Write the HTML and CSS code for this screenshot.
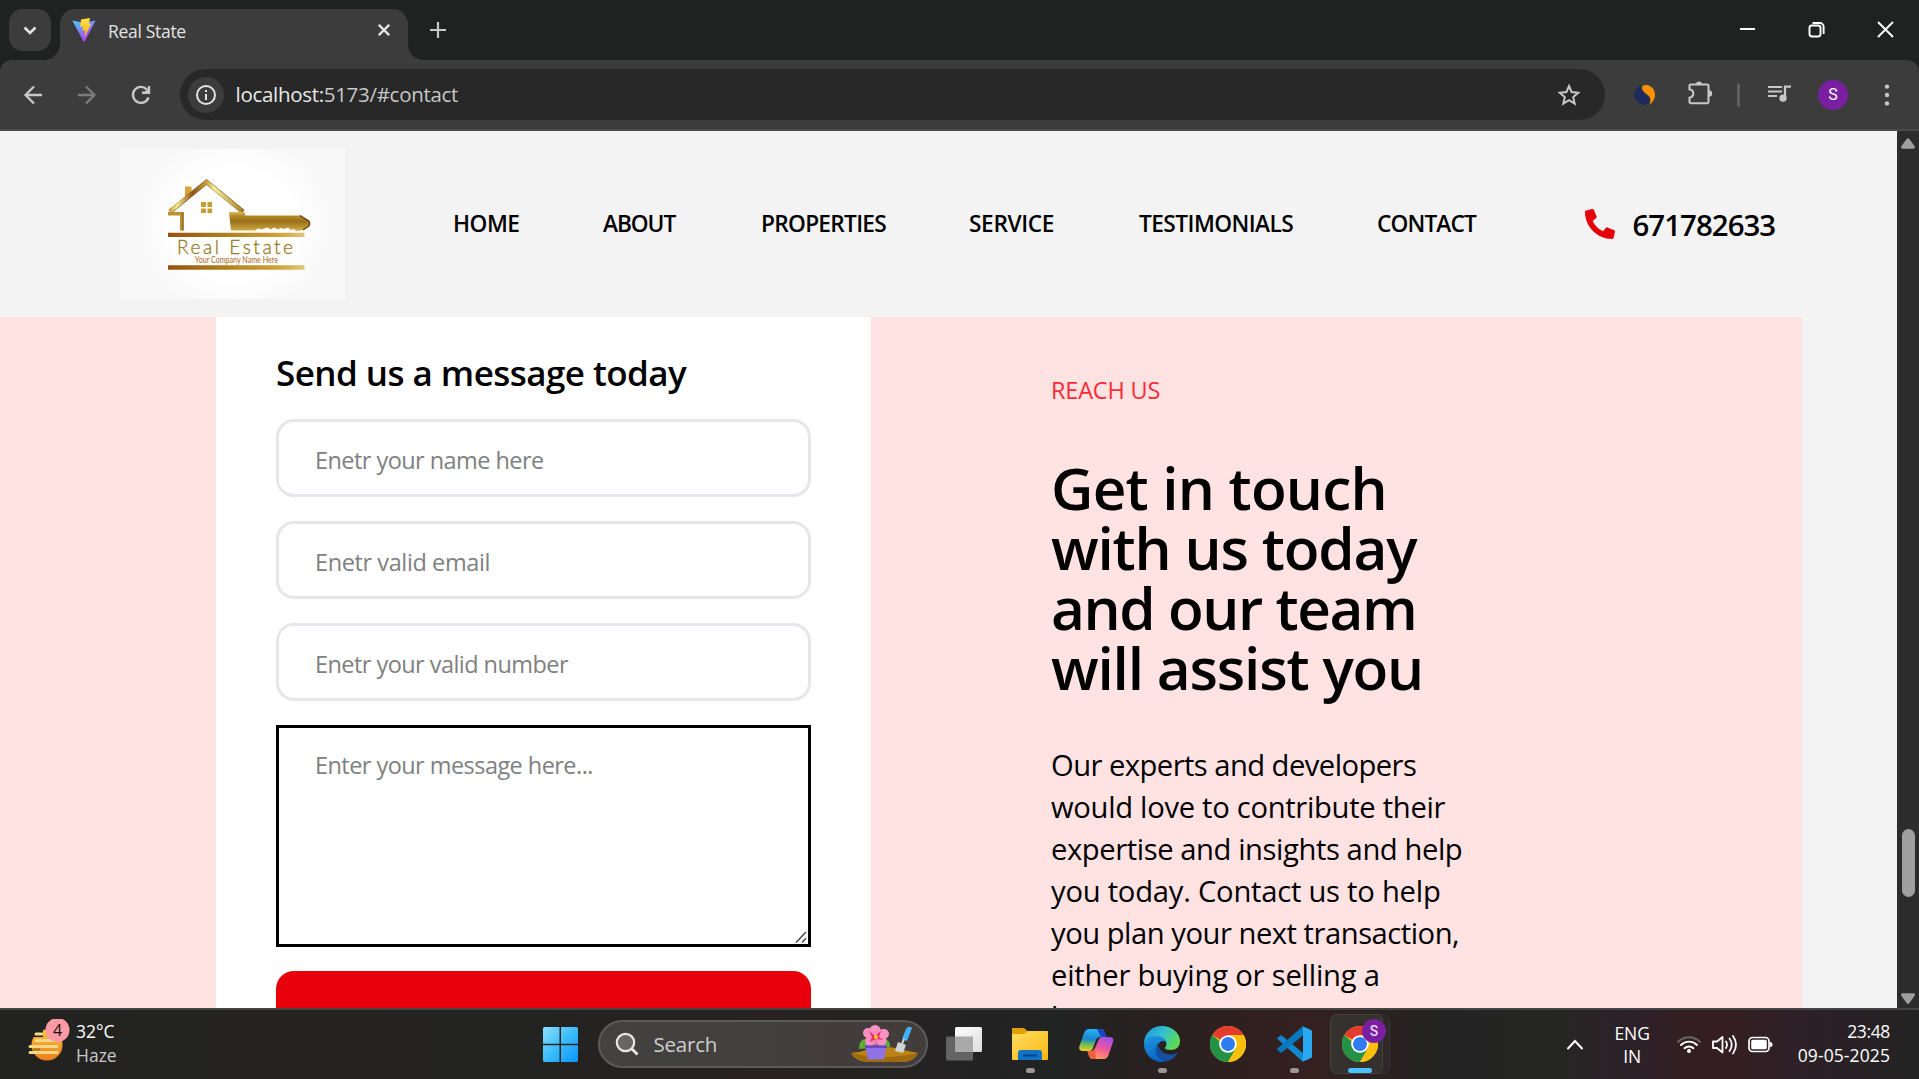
FILE: index.html
```
<!DOCTYPE html>
<html lang="en">
<head>
<meta charset="utf-8">
<title>Real State</title>
<link rel="stylesheet" href="styles.css">
</head>
<body>
<div class="screen">
  <div class="tabstrip">
    <div class="tab-search"><svg width="42" height="42" viewBox="0 0 42 42" fill="none" stroke="#e3e3e3" stroke-width="2.6"><path d="M15.5 18.5l5.5 5.5 5.5-5.5"/></svg></div>
    <div class="tab">
      <svg class="favicon" width="24" height="24" viewBox="0 0 24 24"><defs><linearGradient id="vite" x1="0" y1="0" x2=".6" y2="1"><stop offset="0" stop-color="#41d1ff"/><stop offset="1" stop-color="#bd34fe"/></linearGradient><linearGradient id="bolt" x1="0" y1="0" x2="0" y2="1"><stop offset="0" stop-color="#ffe74a"/><stop offset="1" stop-color="#ffa800"/></linearGradient></defs><path fill="url(#vite)" d="M.3 2.6L8 3.9l8-.1 7.7-1.2L12.6 23.5q-.5.8-1 0z"/><path fill="url(#bolt)" d="M9 1.600L18 0l-1.200 6 2.400-.4-6.600 14 .6-7.400-3 .6 1-4.200-3 .6z"/></svg>
      <span class="tab-title">Real State</span>
      <svg class="tab-close" width="12" height="12" viewBox="0 0 12 12" stroke="#e3e3e3" stroke-width="2.3"><path d="M.8.8l10.400 10.400M11.200.8L.8 11.200"/></svg>
    </div>
    <svg class="new-tab" width="16" height="16" viewBox="0 0 16 16" stroke="#c7c7c7" stroke-width="2.2"><path d="M8 0v16M0 8h16"/></svg>
    <div class="window-buttons">
      <svg width="75" height="58" viewBox="0 0 75 58"><path d="M33 29h15" stroke="#fff" stroke-width="2"/></svg>
      <svg width="69" height="58" viewBox="0 0 69 58" fill="none" stroke="#fff" stroke-width="1.9"><rect x="27.500" y="25.500" width="11" height="11" rx="2.400"/><path d="M30.500 23H38a3.600 3.600 0 0 1 3.600 3.600V34"/></svg>
      <svg width="68" height="58" viewBox="0 0 68 58" stroke="#fff" stroke-width="1.9"><path d="M27 22l15 15M42 22L27 37"/></svg>
    </div>
  </div>
  <div class="toolbar">
    <div class="nav-buttons">
      <svg width="54" height="54" viewBox="0 0 54 54" fill="none" stroke="#c7c7c7" stroke-width="2.3"><path d="M36 27H19.500M28 18.500L19.500 27l8.500 8.500"/></svg>
      <svg width="54" height="54" viewBox="0 0 54 54" fill="none" stroke="#7c7c7c" stroke-width="2.3"><path d="M18 27h16.500M26 18.500l8.500 8.500-8.500 8.500"/></svg>
      <svg width="54" height="54" viewBox="0 0 54 54" fill="none" stroke="#c7c7c7" stroke-width="2.4"><path d="M34.500 29.500a8 8 0 1 1-1.800-8.200M35 18v6.800h-7"/><path d="M34.800 24.500l-5-.1 5-5z" fill="#c7c7c7" stroke="none"/></svg>
    </div>
    <div class="omnibox">
      <svg class="site-info" width="36" height="36" viewBox="0 0 36 36" fill="none" stroke="#e3e3e3" stroke-width="2"><circle cx="18" cy="18" r="18" fill="#3c3c3c" stroke="none"/><circle cx="18" cy="18" r="9"/><path d="M18 17v6M18 13v2"/></svg>
      <span class="url">localhost:<span class="url-rest">5173/#contact</span></span>
      <svg class="star" width="24" height="24" viewBox="0 0 24 24" fill="none" stroke="#c7c7c7" stroke-width="2"><path d="M12 3l2.600 6.100 6.600.6-5 4.400 1.500 6.500L12 17.200l-5.700 3.400 1.500-6.500-5-4.400 6.600-.6z"/></svg>
    </div>
    <div class="extensions">
      <svg class="ext" width="22" height="22" viewBox="0 0 22 22"><path fill="#1f2a5c" d="M6.500 1.500C1 4 0 9 .5 12.500 1.500 18 6 21.500 12 20.500c3-.8 4.500-3.500 3-6.500C13 10 6 8 6.500 1.500z"/><path fill="#ff9100" d="M8.500 2C10.500.4 14.500.4 17.500 3c4.500 4 5.500 12-2 18 2-6 1-8-3-11C9 7.500 7.500 5 8.500 2z"/></svg>
      <svg class="puzzle" width="26" height="26" viewBox="0 0 26 26" fill="none" stroke="#c7c7c7" stroke-width="2.100"><path d="M3.600 4.500h16.800q1.100 0 1.100 1.100v16.500q0 1.100-1.100 1.100H3.600q-1.100 0-1.100-1.100v-4.400c5-1 5-7.400 0-8.400V5.600q0-1.100 1.100-1.100z"/><path fill="#c7c7c7" stroke="none" d="M8.800 4a3.300 3.300 0 0 1 6.400 0zM22 10.200a3.200 3.200 0 0 1 0 6.400z"/></svg>
      <span class="divider"></span>
      <svg class="media" width="24" height="20" viewBox="0 0 24 20" fill="none" stroke="#c7c7c7" stroke-width="2.100"><path d="M0 2h14M0 6.500h14M0 11h9"/><path d="M17 13V1.700h6" stroke-width="2.300"/><circle cx="15" cy="13.200" r="3.600" fill="#c7c7c7" stroke="none"/></svg>
      <span class="avatar">S</span>
      <svg class="kebab" width="6" height="22" viewBox="0 0 6 22" fill="#c7c7c7"><circle cx="3" cy="2.600" r="2.200"/><circle cx="3" cy="11" r="2.200"/><circle cx="3" cy="19.400" r="2.200"/></svg>
    </div>
  </div>

  <div class="viewport">
    <div class="page">
      <header class="site-header">
        <svg class="logo" width="225" height="150" viewBox="0 0 225 150">
          <defs>
            <radialGradient id="glow" cx=".51" cy=".5" r=".5" gradientTransform="translate(.05 -.1) scale(.9 1.200)"><stop offset=".6" stop-color="#fff"/><stop offset="1" stop-color="#f8f8f8"/></radialGradient>
            <linearGradient id="bar"><stop offset="0" stop-color="#99500f"/><stop offset=".4" stop-color="#ab801c"/><stop offset=".8" stop-color="#cda136"/><stop offset="1" stop-color="#e0c77c"/></linearGradient>
            <linearGradient id="roof" gradientUnits="userSpaceOnUse" x1="48" y1="0" x2="125" y2="0"><stop offset="0" stop-color="#c39a2e"/><stop offset=".12" stop-color="#f3e78e"/><stop offset=".32" stop-color="#935317"/><stop offset=".5" stop-color="#c9a040"/><stop offset=".6" stop-color="#f6ef9b"/><stop offset="1" stop-color="#a87a1c"/></linearGradient>
            <linearGradient id="key" x1="0" y1="0" x2="0" y2="1"><stop offset="0" stop-color="#d9bd68"/><stop offset=".2" stop-color="#b58a26"/><stop offset=".5" stop-color="#9a701a"/><stop offset="1" stop-color="#d3ac45"/></linearGradient>
          </defs>
          <rect width="225" height="150" fill="#f8f8f8"/>
          <rect width="225" height="150" fill="url(#glow)"/>
          <path d="M65 37.500h6.500v9L65 53z" fill="#d3a63a"/>
          <path d="M50 62.800L86.500 33 123 62.800" fill="none" stroke="#6b5722" stroke-width="4.600"/>
          <path d="M50 62.500L86.500 33 122 62.200" fill="none" stroke="url(#roof)" stroke-width="3.800"/>
          <path d="M48 63h15.500v18.500H60V66.500H48z" fill="#bd9130"/><path d="M63 63v18.500" stroke="#6b5312"/>
          <path d="M81 53h5v5h-5zM87.500 53H92v5h-4.500zM81 59.500h5V64h-5zM87.500 59.500H92V64h-4.500z" fill="#c99d31"/>
          <path d="M109 63h16v3.500h56l8 5.500q1.500 2.500 0 5l-6 4-7 1-2-2-3 1-3-2.500-4 1.500-3-1-3 1.500-4-2-3 2-4-2-5 2-4-1-3 2h-24z" fill="url(#key)"/>
          <path d="M180 66.500l9 5.500q1.500 2.500 0 5l-6 4" fill="none" stroke="#5d4612" stroke-width="1.200"/>
          <path fill="url(#bar)" d="M48 83.700h136.500V88H48zM48 116.200h136.500v4.500H48z"/>
          <text class="logo-name" x="57" y="105" textLength="116">Real Estate</text>
          <text class="logo-tag" x="75" y="113.700" textLength="83" lengthAdjust="spacingAndGlyphs">Your Company Name Here</text>
        </svg>
        <nav class="menu"><a>HOME</a><a>ABOUT</a><a>PROPERTIES</a><a>SERVICE</a><a>TESTIMONIALS</a><a>CONTACT</a></nav>
        <div class="phone">
          <svg width="30" height="30" viewBox="0 0 512 512" fill="#e7000b"><path d="M497.390 361.800l-112-48a24 24 0 0 0-28 6.900l-49.600 60.600A370.660 370.660 0 0 1 130.600 204.110l60.600-49.600a23.940 23.940 0 0 0 6.900-28l-48-112A24.160 24.160 0 0 0 122.600.61l-104 24A24 24 0 0 0 0 48c0 256.500 207.900 464 464 464a24 24 0 0 0 23.400-18.600l24-104a24.290 24.290 0 0 0-14.010-27.600z"/></svg>
          <span>671782633</span>
        </div>
      </header>
      <section class="contact">
        <form class="card">
          <h2>Send us a message today</h2>
          <input type="text" placeholder="Enetr your name here">
          <input type="text" placeholder="Enetr valid email">
          <input type="text" placeholder="Enetr your valid number">
          <div class="message">
            <textarea placeholder="Enter your message here..."></textarea>
            <svg class="grip" width="12" height="12" viewBox="0 0 12 12" stroke="#444" stroke-width="1.400"><path d="M1 11.500L11 1M7 11.500L11 7.300"/></svg>
          </div>
          <div class="submit"></div>
        </form>
        <div class="reach">
          <h3>REACH US</h3>
          <h1><span>Get in touch</span><span>with us today</span><span>and our team</span><span>will assist you</span></h1>
          <p><span>Our experts and developers</span><span>would love to contribute their</span><span>expertise and insights and help</span><span>you today. Contact us to help</span><span>you plan your next transaction,</span><span>either buying or selling a</span><span>home.</span></p>
        </div>
      </section>
    </div>
    <div class="scrollbar">
      <svg width="14" height="11" viewBox="0 0 14 11" fill="#9f9f9f"><path d="M5.800.8q1.200-1.300 2.400 0L13.500 8q1.200 2.700-1 2.700h-11Q-.7 10.700.5 8z"/></svg>
      <div class="thumb"></div>
      <svg width="14" height="11" viewBox="0 0 14 11" fill="#9f9f9f"><path d="M5.800 10.200q1.200 1.300 2.400 0L13.500 3q1.200-2.700-1-2.700h-11Q-.7.3.5 3z"/></svg>
    </div>
  </div>

  <div class="taskbar">
    <div class="weather">
      <svg width="46" height="48" viewBox="0 0 46 48"><defs><linearGradient id="sun" x1="0" y1="0" x2="0" y2="1"><stop offset="0" stop-color="#f9c440"/><stop offset="1" stop-color="#ed7d1c"/></linearGradient></defs><circle cx="19" cy="26" r="15.500" fill="url(#sun)"/><path d="M4 11h11v7H4z" fill="#242321"/><path d="M8 15h6M8 21.500h23M2 27.500h27M2 33.500h27" stroke="#f6d88a" stroke-width="3" stroke-linecap="round"/><path d="M5 30.500h7" stroke="#a8700f" stroke-width="2"/><circle cx="29.500" cy="11" r="12" fill="#ff99a4"/><text class="badge-num" x="29.500" y="16.500" text-anchor="middle">4</text></svg>
      <div class="two-line"><span>32°C</span><span class="dim">Haze</span></div>
    </div>
    <div class="slot start"><svg width="35" height="35" viewBox="0 0 35 35"><defs><linearGradient id="win" x1="0" y1="0" x2="1" y2="1"><stop offset="0" stop-color="#8adfff"/><stop offset=".5" stop-color="#3cbcfb"/><stop offset="1" stop-color="#0a93fb"/></linearGradient></defs><path fill="url(#win)" d="M1.500 0h15v16.800H0V1.500Q0 0 1.500 0zM18 0h15.500Q35 0 35 1.500v15.300H18zM0 18.200h16.500V35h-15Q0 35 0 33.500zM18 18.200h17v15.300q0 1.500-1.500 1.500H18z"/></svg></div>
    <div class="search">
      <svg width="24" height="24" viewBox="0 0 24 24" fill="none" stroke="#e6e6e6" stroke-width="2.200"><circle cx="10.500" cy="10.500" r="8.700" fill="#666"/><path d="M16.500 16.500l6 6" stroke-width="2.800"/></svg>
      <span>Search</span>
      <svg class="garden" width="68" height="38" viewBox="0 0 68 38"><path d="M0 28q10-1 19-4 15-4 30 0 8 2 18 4-4 9-16 9H18Q5 37 0 28z" fill="#bd8415"/><path d="M1 28q30 8 66 0-5 9-18 9H18Q5 36 1 28z" fill="#9f690f"/><path d="M8 24q0-9 6-10l6 9zM39 22q0-8-6-8l-6 9z" fill="#5fae31"/><circle cx="24.500" cy="11" r="9" fill="#f26aa6"/><g fill="#fa8fc2"><circle cx="17" cy="8" r="5"/><circle cx="24" cy="5.500" r="5.500"/><circle cx="33" cy="9" r="5"/><circle cx="30.500" cy="16" r="5"/><circle cx="19" cy="16" r="5"/></g><path d="M18 6l6 5 6-5-2 6 4 3-7-1-6 3 2-5z" fill="#e5335f"/><circle cx="25" cy="12" r="2" fill="#ffc933"/><path d="M14 20.500h22l-3 14H17z" fill="#8f72e3"/><path d="M14 20.500h22v2.500H14z" fill="#6a4ac0"/><path d="M55 4q3-4 6-1l-5 13-5-2z" fill="#42b1f8"/><path d="M53 14l-2 5" stroke="#ddd" stroke-width="2"/><path d="M47 17l8 3-3 8-8-2z" fill="#cfd4d8"/></svg>
    </div>
    <div class="apps">
      <div class="slot"><svg width="36" height="34" viewBox="0 0 36 34"><defs><linearGradient id="tv" x1="0" y1="0" x2="1" y2="1"><stop offset="0" stop-color="#fff"/><stop offset="1" stop-color="#dcdcdc"/></linearGradient></defs><rect y="9.500" width="27" height="24" rx="1.500" fill="#636363"/><rect x="9" width="27" height="25" rx="1.500" fill="url(#tv)"/><path d="M9 9.500h18V25H9z" fill="#a9a9a9"/></svg></div>
      <div class="slot running"><svg width="36" height="34" viewBox="0 0 36 34"><defs><linearGradient id="fold" x1="0" y1="0" x2="1" y2="1"><stop offset="0" stop-color="#ffdd5f"/><stop offset="1" stop-color="#fdb813"/></linearGradient></defs><path d="M0 2Q0 1 1 1h11l4 3.500H35q1 0 1 1V12H0z" fill="#e2a008"/><path d="M0 7h12l4-3h19q1 0 1 1v27q0 1-1 1H1q-1 0-1-1z" fill="url(#fold)"/><path d="M6 33V26q0-3 3-3h18q3 0 3 3v7z" fill="#1173c8"/><path d="M11 28.500h14" stroke="#0a4386" stroke-width="2"/></svg></div>
      <div class="slot"><svg width="35" height="32" viewBox="0 0 35 32"><defs><linearGradient id="cpa" x1=".3" y1="0" x2=".2" y2="1"><stop offset="0" stop-color="#25b0f2"/><stop offset=".45" stop-color="#1a86cf"/><stop offset=".75" stop-color="#7ec246"/><stop offset="1" stop-color="#f8cd24"/></linearGradient><linearGradient id="cpb" x1=".7" y1="0" x2=".3" y2="1"><stop offset="0" stop-color="#a04fe8"/><stop offset=".5" stop-color="#f0569a"/><stop offset="1" stop-color="#ffa05a"/></linearGradient></defs><path d="M10 1h12q2.500 0 3.500 3l1.500 5h-6q-3 0-4 3l-3 8q-1 3-4 3H4q-5 0-3.500-5L5 5q1.500-4 5-4z" fill="url(#cpa)"/><path d="M18 1h4q2.500 0 3.500 3l1.500 5h-5z" fill="#1746c5"/><path d="M25 31H14q-3 0-4-3l-1.500-5H12q3 0 4-3l3.500-8q1-3 4-3H30q5.500 0 4 5l-4.500 13q-1.500 4-4.500 4z" fill="url(#cpb)"/><path d="M17 31h-3q-3 0-4-3l-1.500-5H12q3 0 4-3z" fill="#f0603f"/></svg></div>
      <div class="slot running"><svg width="36" height="36" viewBox="0 0 36 36"><defs><linearGradient id="e1" x1="0" y1=".2" x2="1" y2=".6"><stop offset="0" stop-color="#2196dd"/><stop offset=".5" stop-color="#35c1cf"/><stop offset="1" stop-color="#5fdc49"/></linearGradient><linearGradient id="e2" x1="0" y1="0" x2=".3" y2="1"><stop offset="0" stop-color="#1c9be0"/><stop offset="1" stop-color="#0d63c4"/></linearGradient></defs><path d="M0 18C0 7 8 0 18 0s18 7 18 15c0 6-4 9-9 9-4 0-6-1-6-2 0-1 1.500-1.500 1.500-4 0-3-3-6-8-6C8 12 2 14 0 18z" fill="url(#e1)"/><path d="M0 18c1-6 7-8 12-8 6 0 10 3 10.500 7-1.500-2-4-2.500-5.500-1.500-5 3-6 10 3 18.500 1 1-1 2-2 2C8 36 0 28 0 18z" fill="url(#e2)"/><path d="M14 17c-5 6-2 17 8 18.500C27 35 31 31.500 33 28c.4-.9-.2-1.300-1-.8-8 3.800-18-1.200-18-10.200z" fill="#13509f"/></svg></div>
      <div class="slot"><svg width="36" height="36" viewBox="0 0 48 48"><g id="chrome"><circle cx="24" cy="24" r="24" fill="#fbbf0d"/><path d="M24 24L3.200 12A24 24 0 0 1 44.800 12z" fill="#e33b2e"/><path d="M3.200 12A24 24 0 0 0 24 48l10.400-18H24z" fill="#239146"/><path d="M24 24l10.400 6L24 48a24 24 0 0 0 20.800-36H24z" fill="#fbbf0d"/><circle cx="24" cy="24" r="11.800" fill="#fff"/><circle cx="24" cy="24" r="9.300" fill="#2f7bf0"/></g></svg></div>
      <div class="slot running"><svg width="36" height="36" viewBox="0 0 36 36"><path d="M1 12.500l3-2.800q1-.6 2 0L27 27v9z" fill="#1187d0"/><path d="M1 23.500l3 2.800q1 .6 2 0L27 9.500V0L1 23q-.5.300 0 .5z" fill="#0878be"/><path d="M26 0l9 4q1 .5 1 1.500v25q0 1-1 1.500l-9 4q1-.5 1-2V2q0-1.500-1-2z" fill="#2aaaf2"/></svg></div>
      <div class="slot active"><div class="tile-back"></div><div class="tile"></div><svg width="36" height="36" viewBox="0 0 48 48"><use href="#chrome"/></svg><span class="profile">S</span></div>
    </div>
    <div class="tray">
      <svg class="chev" width="18" height="12" viewBox="0 0 18 12" fill="none" stroke="#fff" stroke-width="2" stroke-linecap="round"><path d="M2 9.500L9 2l7 7.500"/></svg>
      <div class="two-line lang"><span>ENG</span><span>IN</span></div>
      <svg class="wifi" width="24" height="20" viewBox="0 0 24 20" fill="none" stroke="#fff" stroke-width="1.900" stroke-linecap="round"><path d="M1 7a15 15 0 0 1 22 0" stroke="#666"/><path d="M4 10a11.200 11.200 0 0 1 16 0M7.500 13.200a6.600 6.600 0 0 1 9 0"/><circle cx="12" cy="16" r="2" fill="#fff" stroke="none"/></svg>
      <svg class="vol" width="25" height="22" viewBox="0 0 25 22" fill="none" stroke="#fff" stroke-width="1.800" stroke-linecap="round" stroke-linejoin="round"><path d="M1 7.500V14h4l5.500 4.500V3L5 7.500zM14 7.500q2 3 0 6.500M17.500 4.500q4.500 6 0 12.500M21 2q6 8.700 0 17.500"/></svg>
      <svg class="battery" width="25" height="18" viewBox="0 0 25 18"><rect x="1" y="1.500" width="20" height="14" rx="3.500" fill="none" stroke="#fff" stroke-width="1.700"/><rect x="3.200" y="3.700" width="15.600" height="9.600" rx="1.500" fill="#fff"/><path d="M22 6q2.500 0 2.500 2.500T22 11z" fill="#fff"/></svg>
      <div class="two-line clock"><span class="time">23:48</span><span>09-05-2025</span></div>
    </div>
  </div>
</div>
</body>
</html>
```
FILE: styles.css
```
* { box-sizing: border-box; }
body { margin: 0; font-family: "Open Sans", "Noto Sans", sans-serif; color: #000; background: #202221; }
svg { display: block; flex: none; }
h1, h2, h3, p { margin: 0; }
.screen { width: 1919px; height: 1079px; display: flex; flex-direction: column; overflow: hidden; white-space: nowrap; }

/* browser tab strip */
.tabstrip { height: 60px; display: flex; background: #202221; flex: none; }
.tab-search { width: 42px; height: 42px; margin: 9px 9px 0; border-radius: 14px; background: #3c3c3c; }
.tab { position: relative; width: 348px; height: 51px; margin-top: 9px; padding: 0 18px 0 12px; display: flex; align-items: flex-start; background: #3c3c3c; border-radius: 15px 15px 0 0; }
.tab::before, .tab::after { content: ""; position: absolute; bottom: 0; width: 15px; height: 15px; }
.tab::before { left: -15px; background: radial-gradient(circle at 0 0, transparent 14.5px, #3c3c3c 15px); }
.tab::after { right: -15px; background: radial-gradient(circle at 100% 0, transparent 14.5px, #3c3c3c 15px); }
.favicon { margin-top: 9px; }
.tab-title { margin: 10px 0 0 12px; font-size: 17.5px; line-height: 24px; letter-spacing: -.31px; color: #e3e3e3; flex: 1; }
.tab-close { margin-top: 15px; }
.new-tab { margin: 22px 0 0 22px; }
.window-buttons { display: flex; margin-left: auto; }

/* toolbar */
.toolbar { height: 71px; flex: none; display: flex; align-items: center; background: #3c3c3c; border-bottom: 2px solid #4a4a4a; border-radius: 12px 12px 0 0; }
.nav-buttons { display: flex; width: 180px; padding-left: 6px; }
.omnibox { width: 1425px; height: 51px; border-radius: 26px; background: #282828; display: flex; align-items: center; padding: 0 24px 0 7.5px; }
.url { margin-left: 12px; font-size: 20.5px; letter-spacing: -.3px; color: #e8e8e8; line-height: 30px; margin-top: -2px; flex: 1; }
.url-rest { color: #c7c7c7; }
.extensions { display: flex; align-items: center; }
.ext { margin-left: 28.5px; }
.puzzle { margin: -3px 0 0 31.5px; }
.divider { width: 3px; height: 24px; border-radius: 2px; background: #5f5f5f; margin-left: 24px; }
.media { margin-left: 28px; }
.avatar { width: 30px; height: 30px; border-radius: 50%; background: #7b1fa2; color: #fff; font: 16px/30px Roboto, sans-serif; text-align: center; margin-left: 26px; }
.kebab { margin-left: 36px; }

/* page */
.viewport { height: 877px; flex: none; display: flex; overflow: hidden; }
.page { width: 1897px; height: 877px; background: #f3f3f3; overflow: hidden; }
.site-header { height: 186px; padding: 18px 120px; display: flex; align-items: center; }
.logo-name { font: 300 19px Lato, sans-serif; fill: #96781c; stroke: #96781c; stroke-width: .3px; }
.logo-tag { font: 8.5px Lato, sans-serif; fill: #a8661c; }
.menu { margin: 0 0 0 108px; display: grid; grid-template-columns: 150px 158px 208px 170px 238px 208px; font-size: 22.7px; line-height: 36px; font-weight: 600; }
.menu a:nth-child(1) { letter-spacing: -.5px; }
.menu a:nth-child(2) { letter-spacing: -1.07px; }
.menu a:nth-child(3) { letter-spacing: -.72px; }
.menu a:nth-child(4) { letter-spacing: -.38px; }
.menu a:nth-child(5) { letter-spacing: -.56px; }
.menu a:nth-child(6) { letter-spacing: -.87px; }
.phone { display: flex; align-items: center; font-size: 29.4px; line-height: 42px; font-weight: 600; letter-spacing: -.95px; }
.phone span { margin: 2px 0 0 17.5px; }
.contact { width: 1802px; height: 691px; background: #ffe2e2; display: flex; padding-left: 216px; }
.card { width: 655px; height: 900px; background: #fff; padding: 29px 60px 0; display: flex; flex-direction: column; }
.card h2 { font-size: 35px; line-height: 54px; font-weight: 600; letter-spacing: -.55px; margin-bottom: 19px; }
.card input, .card textarea { font: 23.5px/36px "Open Sans", sans-serif; letter-spacing: -.55px; width: 535px; border: 3px solid #e5e7eb; outline: none; background: #fff; margin: 0; }
.card input { height: 78px; border-radius: 18px; padding: 3px 36px 0; margin-bottom: 24px; }
.card input:nth-of-type(2) { letter-spacing: -.4px; }
.message { position: relative; height: 222px; margin-bottom: 24px; }
.card textarea { height: 222px; border-color: #000; border-radius: 0; padding: 19px 36px; display: block; resize: none; }
.grip { position: absolute; right: 4.5px; bottom: 4px; }
.card ::placeholder { color: #808080; opacity: 1; }
.submit { height: 90px; background: #e7000b; border-radius: 18px; flex: none; }
.reach { padding: 55px 0 0 180px; }
.reach h3 { font-size: 23.5px; line-height: 36px; font-weight: 400; letter-spacing: -.2px; color: #fb2c36; }
.reach h1 { margin-top: 49px; font-size: 58.5px; line-height: 60px; font-weight: 600; letter-spacing: -1.2px; }
.reach span { display: block; }
.reach h1 span:nth-child(1) { letter-spacing: -.8px; }
.reach h1 span:nth-child(3) { letter-spacing: -1.44px; }
.reach p { margin-top: 47px; font-size: 29.2px; line-height: 42px; letter-spacing: -.42px; }
.reach p span:nth-child(1) { letter-spacing: -.55px; }
.reach p span:nth-child(2) { letter-spacing: -.3px; }
.reach p span:nth-child(4) { letter-spacing: -.24px; }
.reach p span:nth-child(5) { letter-spacing: -.48px; }
.reach p span:nth-child(6) { letter-spacing: -.2px; }
.scrollbar { width: 22px; background: #2c2c2c; display: flex; flex-direction: column; align-items: center; padding: 7px 0 4px; }
.thumb { width: 13px; height: 68px; border-radius: 7px; background: #9f9f9f; margin: 680px 0 auto; }

/* taskbar */
.taskbar { height: 71px; flex: none; border-top: 2px solid #454545; display: flex; align-items: center; color: #fff; background: linear-gradient(90deg, #222321 0, #24231f 15%, #232322 28%, #282222 40%, #222323 55%, #2b2020 62%, #34201f 68%, #232423 75%, #252624 81%, #2c2128 85%, #351e22 89%, #2d2027 94%, #232323 100%); }
.two-line { display: flex; flex-direction: column; font-size: 17.5px; line-height: 24px; }
.dim { color: #c8c8c8; }
.weather { width: 527px; padding-left: 28px; display: flex; align-items: center; margin-top: -3px; }
.weather .two-line { margin-left: 2px; }
.badge-num { font: 16px "Open Sans", sans-serif; fill: #111; }
.slot { position: relative; width: 66px; height: 69px; display: flex; align-items: center; justify-content: center; }
.slot > svg { margin-top: -1px; }
.start { width: 67px; }
.search { width: 330px; height: 48px; margin: -1px 0 0 4px; border: 2px solid #5c5a59; border-radius: 24px; background: linear-gradient(90deg, #434241, #423c3b); display: flex; align-items: center; padding: 0 7px 0 15px; }
.search span { font-size: 20.5px; line-height: 30px; letter-spacing: -.2px; color: #cfcdcc; margin: -1px 0 0 14.5px; flex: 1; }
.apps { display: flex; margin-left: 3px; }
.running::after, .active::after { content: ""; position: absolute; bottom: 6px; left: 28.500px; width: 9px; height: 5px; border-radius: 3px; background: #9b9694; }
.active::after { left: 21px; width: 24px; background: #4cc2ff; }
.tile, .tile-back { position: absolute; left: 3px; top: 4px; width: 53px; height: 60px; border-radius: 7px; background: #35312f; border: 1px solid #45413f; }
.tile-back { width: 60px; background: #2c2928; border-color: #363433; }
.active svg { position: relative; }
.profile { position: absolute; left: 35px; top: 9px; width: 24px; height: 24px; border-radius: 50%; background: #7b1fa2; color: #e6d5ee; font: 500 14px/24px Roboto, sans-serif; text-align: center; }
.tray { display: flex; align-items: center; margin-left: auto; padding-right: 29px; }
.lang { align-items: center; line-height: 23px; margin: 0 27px 0 30px; }
.vol { margin-left: 11px; }
.battery { margin: 0 0 0 11px; }
.clock { width: 92px; margin: -3px 0 0 25px; align-items: flex-end; letter-spacing: .1px; }
.time { letter-spacing: -.35px; }
```
